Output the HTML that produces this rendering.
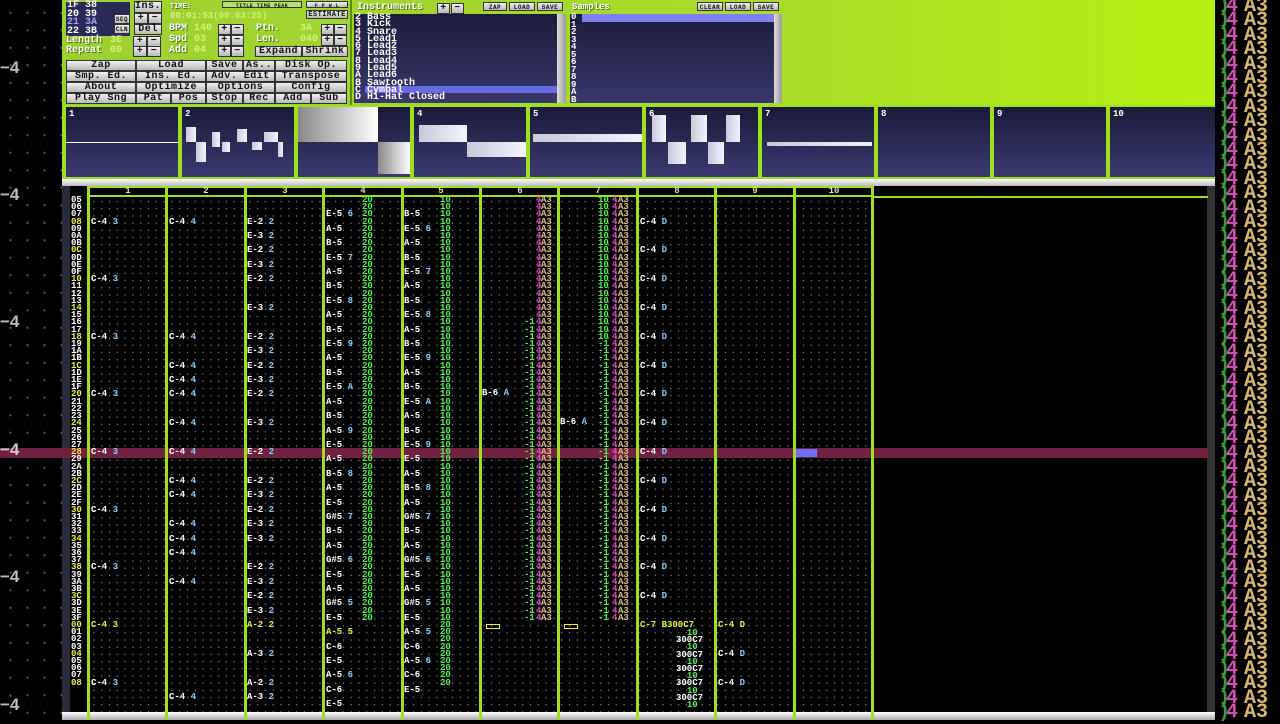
<!DOCTYPE html>
<html><head><meta charset="utf-8">
<style>
*{margin:0;padding:0;box-sizing:border-box}
body{width:1280px;height:720px;overflow:hidden;background:#000;position:relative;font-family:"Liberation Mono",monospace;font-weight:bold}
.a{position:absolute}
pre{position:absolute;font-family:"Liberation Mono",monospace;font-weight:bold;font-size:9px;line-height:7.2px;white-space:pre;margin:0}
.top{left:62px;top:0;width:1153px;height:106px;background:linear-gradient(90deg,#9cd030 0%,#a8dc2c 60%,#b4f010 100%)}
.btn{position:absolute;background:linear-gradient(#f0f0f0,#b8b8b8);border:1px solid #333;color:#111;font-size:10px;line-height:9px;text-align:center;height:11px;letter-spacing:0.5px}
.lbl{position:absolute;color:#fff;font-size:10px;line-height:10px;text-shadow:1px 1px 0 #4a7010}
.val{position:absolute;color:#d8f080;font-size:10px;line-height:10px}
.navy{position:absolute;background:linear-gradient(#1c1c3a,#38386c);}
.smp{position:absolute;top:107px;height:70px;background:linear-gradient(#1a1a38,#3a3a72);border-right:3px solid #9ee020}
.smp span{position:absolute;left:3px;top:2px;color:#fff;font-size:9px}
.w{position:absolute;background:linear-gradient(90deg,#c8c8d8,#f4f4ff)}
.sep{position:absolute;top:186px;width:3px;height:534px;background:#9ee020}
.lm{position:absolute;left:0;color:#bbb;font-size:17px;font-family:"Liberation Sans",sans-serif;font-weight:bold}
.hn{position:absolute;top:187px;width:20px;margin-left:-10px;text-align:center;font-size:9px;line-height:9px;color:#e8e860}
</style></head><body>

<div class="a" style="left:0;top:0;width:62px;height:720px;background-image:radial-gradient(circle,#555 1px,transparent 1.3px);background-size:17px 17.5px;background-position:2px 4px"></div>
<div class="lm" style="top:58px">−4</div>
<div class="lm" style="top:185px">−4</div>
<div class="lm" style="top:312px">−4</div>
<div class="lm" style="top:567px">−4</div>
<div class="lm" style="top:695px">−4</div>

<div class="a" style="left:1215px;top:0;width:65px;height:720px;background:#000"></div>
<pre style="left:1218px;top:0;font-size:20px;line-height:14.4px;color:#3a9a3a">
)
)
)
)
)
)
)
)
)
)
)
)
)
)
)
)
)
)
)
)
)
)
)
)
)
)
)
)
)
)
)
)
)
)
)
)
)
)
)
)
)
)
)
)
)
)
)
)
)
)
</pre>
<pre style="left:1226px;top:0;font-size:20px;line-height:14.4px;color:#d050b0">
4
4
4
4
4
4
4
4
4
4
4
4
4
4
4
4
4
4
4
4
4
4
4
4
4
4
4
4
4
4
4
4
4
4
4
4
4
4
4
4
4
4
4
4
4
4
4
4
4
4
</pre>
<pre style="left:1244px;top:0;font-size:20px;line-height:14.4px;color:#d8b870">
A3
A3
A3
A3
A3
A3
A3
A3
A3
A3
A3
A3
A3
A3
A3
A3
A3
A3
A3
A3
A3
A3
A3
A3
A3
A3
A3
A3
A3
A3
A3
A3
A3
A3
A3
A3
A3
A3
A3
A3
A3
A3
A3
A3
A3
A3
A3
A3
A3
A3
</pre>

<div class="a top"></div>
<div class="navy" style="left:66px;top:2px;width:64px;height:34px;background:#2a2a58"></div>
<pre style="left:67px;top:2px;font-size:10px;line-height:8.5px;color:#fff">
1F 38
20 39
<span style="color:#a0a0ff">21 3A</span>
22 3B</pre>
<div class="btn" style="left:114px;top:14px;width:16px;height:10px;font-size:6px">SEQ</div>
<div class="btn" style="left:114px;top:24px;width:16px;height:10px;font-size:6px">CLN</div>
<div class="btn" style="left:134px;top:1px;width:28px;height:12px">Ins.</div>
<div class="btn" style="left:134px;top:13px;width:14px">+</div><div class="btn" style="left:148px;top:13px;width:14px">−</div>
<div class="btn" style="left:134px;top:24px;width:28px">Del</div>
<div class="lbl" style="left:66px;top:36px">Length</div><div class="val" style="left:110px;top:36px">3E</div>
<div class="btn" style="left:133px;top:36px;width:14px">+</div><div class="btn" style="left:147px;top:36px;width:14px">−</div>
<div class="lbl" style="left:66px;top:46px">Repeat</div><div class="val" style="left:110px;top:46px">00</div>
<div class="btn" style="left:133px;top:46px;width:14px">+</div><div class="btn" style="left:147px;top:46px;width:14px">−</div>
<div class="lbl" style="left:170px;top:2px;font-size:7px">TIME:</div>
<div class="val" style="left:170px;top:11px;font-size:9px">00:01:53(00:03:25)</div>
<div class="btn" style="left:222px;top:1px;width:80px;height:7px;font-size:5px;background:#b8e070">TITLE TIME PEAK</div>
<div class="btn" style="left:306px;top:1px;width:42px;height:7px;font-size:5px">F P W L</div>
<div class="btn" style="left:306px;top:10px;width:42px;height:9px;font-size:7px">ESTIMATE</div>
<div class="lbl" style="left:169px;top:24px">BPM</div><div class="val" style="left:194px;top:24px">140</div>
<div class="lbl" style="left:169px;top:35px">Spd</div><div class="val" style="left:194px;top:35px">03</div>
<div class="lbl" style="left:169px;top:46px">Add</div><div class="val" style="left:194px;top:46px">04</div>
<div class="btn" style="left:218px;top:24px;width:13px">+</div><div class="btn" style="left:231px;top:24px;width:13px">−</div>
<div class="btn" style="left:218px;top:35px;width:13px">+</div><div class="btn" style="left:231px;top:35px;width:13px">−</div>
<div class="btn" style="left:218px;top:46px;width:13px">+</div><div class="btn" style="left:231px;top:46px;width:13px">−</div>
<div class="lbl" style="left:256px;top:24px">Ptn.</div><div class="val" style="left:300px;top:24px">3A</div>
<div class="lbl" style="left:256px;top:35px">Len.</div><div class="val" style="left:300px;top:35px">040</div>
<div class="btn" style="left:321px;top:24px;width:13px">+</div><div class="btn" style="left:334px;top:24px;width:13px">−</div>
<div class="btn" style="left:321px;top:35px;width:13px">+</div><div class="btn" style="left:334px;top:35px;width:13px">−</div>
<div class="btn" style="left:255px;top:46px;width:47px">Expand</div><div class="btn" style="left:302px;top:46px;width:46px">Shrink</div>

<div class="btn" style="left:66px;top:60px;width:70px">Zap</div>
<div class="btn" style="left:136px;top:60px;width:70px">Load</div>
<div class="btn" style="left:206px;top:60px;width:37px">Save</div>
<div class="btn" style="left:243px;top:60px;width:32px">As..</div>
<div class="btn" style="left:275px;top:60px;width:72px">Disk Op.</div>
<div class="btn" style="left:66px;top:71px;width:70px">Smp. Ed.</div>
<div class="btn" style="left:136px;top:71px;width:70px">Ins. Ed.</div>
<div class="btn" style="left:206px;top:71px;width:69px">Adv. Edit</div>
<div class="btn" style="left:275px;top:71px;width:72px">Transpose</div>
<div class="btn" style="left:66px;top:82px;width:70px">About</div>
<div class="btn" style="left:136px;top:82px;width:70px">Optimize</div>
<div class="btn" style="left:206px;top:82px;width:69px">Options</div>
<div class="btn" style="left:275px;top:82px;width:72px">Config</div>
<div class="btn" style="left:66px;top:93px;width:70px">Play Sng</div>
<div class="btn" style="left:136px;top:93px;width:35px">Pat</div>
<div class="btn" style="left:171px;top:93px;width:35px">Pos</div>
<div class="btn" style="left:206px;top:93px;width:37px">Stop</div>
<div class="btn" style="left:243px;top:93px;width:32px">Rec</div>
<div class="btn" style="left:275px;top:93px;width:36px">Add</div>
<div class="btn" style="left:311px;top:93px;width:36px">Sub</div>

<div class="a" style="left:350px;top:0;width:2px;height:106px;background:#5a8a10"></div>
<div class="lbl" style="left:357px;top:3px;font-size:10px">Instruments</div>
<div class="btn" style="left:437px;top:3px;width:13px">+</div><div class="btn" style="left:451px;top:3px;width:13px">−</div>
<div class="btn" style="left:483px;top:2px;width:24px;height:9px;font-size:6px">ZAP</div>
<div class="btn" style="left:509px;top:2px;width:26px;height:9px;font-size:6px">LOAD</div>
<div class="btn" style="left:537px;top:2px;width:26px;height:9px;font-size:6px">SAVE</div>
<div class="navy" style="left:354px;top:14px;width:203px;height:89px"></div>
<div class="a" style="left:365px;top:86px;width:192px;height:7px;background:#6a6ae0"></div>
<pre style="left:355px;top:14px;font-size:10px;line-height:7.3px;color:#fff">
2 Bass
3 Kick
4 Snare
5 Lead1
6 Lead2
7 Lead3
8 Lead4
9 Lead5
A Lead6
B Sawtooth
C Cymbal
D Hi-Hat Closed</pre>
<div class="a" style="left:557px;top:14px;width:9px;height:89px;background:linear-gradient(90deg,#ddd,#999)"></div>
<div class="lbl" style="left:572px;top:2px;font-size:9px">Samples</div>
<div class="btn" style="left:697px;top:2px;width:26px;height:9px;font-size:6px">CLEAR</div>
<div class="btn" style="left:725px;top:2px;width:26px;height:9px;font-size:6px">LOAD</div>
<div class="btn" style="left:753px;top:2px;width:26px;height:9px;font-size:6px">SAVE</div>
<div class="navy" style="left:570px;top:14px;width:204px;height:89px"></div>
<div class="a" style="left:582px;top:14px;width:192px;height:8px;background:#8080f0"></div>
<pre style="left:571px;top:14px;font-size:9px;line-height:7.5px;color:#fff">
0
1
2
3
4
5
6
7
8
9
A
B</pre>
<div class="a" style="left:774px;top:14px;width:8px;height:89px;background:linear-gradient(90deg,#ddd,#999)"></div>

<div class="a" style="left:62px;top:105px;width:1153px;height:74px;background:#9ee020"></div>
<div class="smp" style="left:66px;width:115px"><span>1</span><div class="w" style="left:0;top:35px;width:112px;height:1px;background:#fff"></div></div>
<div class="smp" style="left:182px;width:115px"><span>2</span>
<div class="w" style="left:4px;top:20px;width:10px;height:15px"></div><div class="w" style="left:14px;top:35px;width:10px;height:20px"></div><div class="w" style="left:30px;top:25px;width:8px;height:15px"></div><div class="w" style="left:40px;top:35px;width:8px;height:10px"></div><div class="w" style="left:55px;top:22px;width:10px;height:13px"></div><div class="w" style="left:70px;top:35px;width:10px;height:8px"></div><div class="w" style="left:82px;top:25px;width:14px;height:10px"></div><div class="w" style="left:96px;top:35px;width:5px;height:15px"></div></div>
<div class="smp" style="left:298px;width:115px"><span>3</span><div class="w" style="left:0;top:0;width:80px;height:35px;background:linear-gradient(90deg,#888,#fff)"></div><div class="w" style="left:80px;top:35px;width:32px;height:32px;background:linear-gradient(90deg,#888,#fff)"></div></div>
<div class="smp" style="left:414px;width:115px"><span>4</span><div class="w" style="left:5px;top:18px;width:48px;height:17px"></div><div class="w" style="left:53px;top:35px;width:59px;height:15px"></div></div>
<div class="smp" style="left:530px;width:115px"><span>5</span><div class="w" style="left:3px;top:27px;width:109px;height:8px"></div></div>
<div class="smp" style="left:646px;width:115px"><span>6</span><div class="w" style="left:6px;top:8px;width:14px;height:27px"></div><div class="w" style="left:22px;top:35px;width:18px;height:22px"></div><div class="w" style="left:45px;top:8px;width:16px;height:27px"></div><div class="w" style="left:62px;top:35px;width:16px;height:22px"></div><div class="w" style="left:80px;top:8px;width:14px;height:27px"></div></div>
<div class="smp" style="left:762px;width:115px"><span>7</span><div class="w" style="left:5px;top:35px;width:105px;height:4px"></div></div>
<div class="smp" style="left:878px;width:115px"><span>8</span></div>
<div class="smp" style="left:994px;width:115px"><span>9</span></div>
<div class="smp" style="left:1110px;width:105px;border-right:none"><span>10</span></div>

<div class="a" style="left:62px;top:179px;width:1153px;height:7px;background:linear-gradient(#fff,#bbb)"></div>
<div class="a" style="left:62px;top:712px;width:1153px;height:8px;background:linear-gradient(#fff,#aaa)"></div>
<div class="a" style="left:1207px;top:186px;width:8px;height:526px;background:#333"></div>
<div class="a" style="left:62px;top:186px;width:8px;height:526px;background:#2a2a3a"></div>

<div class="a" style="left:88px;top:197px;width:784px;height:515px;background-image:radial-gradient(circle,#777 0.6px,transparent 0.9px);background-size:7.8px 7.2px;background-position:2px 1px"></div>
<div class="a" style="left:88px;top:186px;width:784px;height:11px;background:#000;border-top:2px solid #9ee020;border-bottom:2px solid #9ee020"></div>
<div class="a" style="left:872px;top:196px;width:336px;height:2px;background:#9ee020"></div>
<div class="hn" style="left:128px">1</div><div class="hn" style="left:206px;color:#ddd">2</div><div class="hn" style="left:285px">3</div><div class="hn" style="left:363px;color:#ddd">4</div><div class="hn" style="left:441px">5</div><div class="hn" style="left:520px;color:#ddd">6</div><div class="hn" style="left:598px">7</div><div class="hn" style="left:677px;color:#ddd">8</div><div class="hn" style="left:755px">9</div><div class="hn" style="left:834px;color:#ddd">10</div>

<div class="a" style="left:0;top:448px;width:1208px;height:10px;background:#702040"></div>
<div class="lm" style="top:440px;color:#ccc">−4</div>
<div class="a" style="left:796px;top:449px;width:21px;height:8px;background:#7070ff"></div>

<div class="sep" style="left:87px"></div><div class="sep" style="left:165px"></div><div class="sep" style="left:244px"></div><div class="sep" style="left:322px"></div><div class="sep" style="left:401px"></div><div class="sep" style="left:479px"></div><div class="sep" style="left:557px"></div><div class="sep" style="left:636px"></div><div class="sep" style="left:714px"></div><div class="sep" style="left:793px"></div><div class="sep" style="left:871px"></div>

<pre style="left:71px;top:197px;color:#fff">
05
06
07
<span style="color:#ee4">08</span>
09
0A
0B
<span style="color:#ee4">0C</span>
0D
0E
0F
<span style="color:#ee4">10</span>
11
12
13
<span style="color:#ee4">14</span>
15
16
17
<span style="color:#ee4">18</span>
19
1A
1B
<span style="color:#ee4">1C</span>
1D
1E
1F
<span style="color:#ee4">20</span>
21
22
23
<span style="color:#ee4">24</span>
25
26
27
<span style="color:#ee4">28</span>
29
2A
2B
<span style="color:#ee4">2C</span>
2D
2E
2F
<span style="color:#ee4">30</span>
31
32
33
<span style="color:#ee4">34</span>
35
36
37
<span style="color:#ee4">38</span>
39
3A
3B
<span style="color:#ee4">3C</span>
3D
3E
3F
<span style="color:#ee4">00</span>
01
02
03
<span style="color:#ee4">04</span>
05
06
07
<span style="color:#ee4">08</span></pre>

<pre style="left:91px;top:197px;color:#fff">



C-4 <span style="color:#8cf">3</span>







C-4 <span style="color:#8cf">3</span>







C-4 <span style="color:#8cf">3</span>







C-4 <span style="color:#8cf">3</span>







C-4 <span style="color:#8cf">3</span>







C-4 <span style="color:#8cf">3</span>







C-4 <span style="color:#8cf">3</span>







<span style="color:#ee4">C-4 3</span>







C-4 <span style="color:#8cf">3</span></pre>
<pre style="left:169px;top:197px;color:#fff">



C-4 <span style="color:#8cf">4</span>















C-4 <span style="color:#8cf">4</span>



C-4 <span style="color:#8cf">4</span>

C-4 <span style="color:#8cf">4</span>

C-4 <span style="color:#8cf">4</span>



C-4 <span style="color:#8cf">4</span>



C-4 <span style="color:#8cf">4</span>



C-4 <span style="color:#8cf">4</span>

C-4 <span style="color:#8cf">4</span>



C-4 <span style="color:#8cf">4</span>

C-4 <span style="color:#8cf">4</span>

C-4 <span style="color:#8cf">4</span>



C-4 <span style="color:#8cf">4</span>















C-4 <span style="color:#8cf">4</span></pre>
<pre style="left:247px;top:197px;color:#fff">



E-2 <span style="color:#8cf">2</span>

E-3 <span style="color:#8cf">2</span>

E-2 <span style="color:#8cf">2</span>

E-3 <span style="color:#8cf">2</span>

E-2 <span style="color:#8cf">2</span>



E-3 <span style="color:#8cf">2</span>



E-2 <span style="color:#8cf">2</span>

E-3 <span style="color:#8cf">2</span>

E-2 <span style="color:#8cf">2</span>

E-3 <span style="color:#8cf">2</span>

E-2 <span style="color:#8cf">2</span>



E-3 <span style="color:#8cf">2</span>



E-2 <span style="color:#8cf">2</span>



E-2 <span style="color:#8cf">2</span>

E-3 <span style="color:#8cf">2</span>

E-2 <span style="color:#8cf">2</span>

E-3 <span style="color:#8cf">2</span>

E-3 <span style="color:#8cf">2</span>



E-2 <span style="color:#8cf">2</span>

E-3 <span style="color:#8cf">2</span>

E-2 <span style="color:#8cf">2</span>

E-3 <span style="color:#8cf">2</span>

<span style="color:#ee4">A-2 2</span>



A-3 <span style="color:#8cf">2</span>



A-2 <span style="color:#8cf">2</span>

A-3 <span style="color:#8cf">2</span></pre>
<pre style="left:326px;top:197px;color:#fff">


E-5 <span style="color:#8cf">6</span>

A-5

B-5

E-5 <span style="color:#8cf">7</span>

A-5

B-5

E-5 <span style="color:#8cf">8</span>

A-5

B-5

E-5 <span style="color:#8cf">9</span>

A-5

B-5

E-5 <span style="color:#8cf">A</span>

A-5

B-5

A-5 <span style="color:#8cf">9</span>

E-5

A-5

B-5 <span style="color:#8cf">8</span>

A-5

E-5

G#5 <span style="color:#8cf">7</span>

B-5

A-5

G#5 <span style="color:#8cf">6</span>

E-5

A-5

G#5 <span style="color:#8cf">5</span>

E-5

<span style="color:#ee4">A-5 5</span>

C-6

E-5

A-5 <span style="color:#8cf">6</span>

C-6

E-5</pre>
<pre style="left:362px;top:197px;color:#5e5">
20
20
20
20
20
20
20
20
20
20
20
20
20
20
20
20
20
20
20
20
20
20
20
20
20
20
20
20
20
20
20
20
20
20
20
20
20
20
20
20
20
20
20
20
20
20
20
20
20
20
20
20
20
20
20
20
20
20
20</pre>
<pre style="left:404px;top:197px;color:#fff">


B-5

E-5 <span style="color:#8cf">6</span>

A-5

B-5

E-5 <span style="color:#8cf">7</span>

A-5

B-5

E-5 <span style="color:#8cf">8</span>

A-5

B-5

E-5 <span style="color:#8cf">9</span>

A-5

B-5

E-5 <span style="color:#8cf">A</span>

A-5

B-5

E-5 <span style="color:#8cf">9</span>

E-5

A-5

B-5 <span style="color:#8cf">8</span>

A-5

G#5 <span style="color:#8cf">7</span>

B-5

A-5

G#5 <span style="color:#8cf">6</span>

E-5

A-5

G#5 <span style="color:#8cf">5</span>

E-5

A-5 <span style="color:#8cf">5</span>

C-6

A-5 <span style="color:#8cf">6</span>

C-6

E-5</pre>
<pre style="left:440px;top:197px;color:#5e5">
10
10
10
10
10
10
10
10
10
10
10
10
10
10
10
10
10
10
10
10
10
10
10
10
10
10
10
10
10
10
10
10
10
10
10
10
10
10
10
10
10
10
10
10
10
10
10
10
10
10
10
10
10
10
10
10
10
10
10
20
20
20
20
20
20
20
20
20</pre>
<pre style="left:524px;top:197px;color:#5e5">

















-1
-1
-1
-1
-1
-1
-1
-1
-1
-1
-1
-1
-1
-1
-1
-1
-1
-1
-1
-1
-1
-1
-1
-1
-1
-1
-1
-1
-1
-1
-1
-1
-1
-1
-1
-1
-1
-1
-1
-1
-1
-1</pre>
<pre style="left:482px;top:390px;color:#fff">
B-6 <span style="color:#8cf">A</span></pre>
<pre style="left:536px;top:197px;color:#e050c0">
4
4
4
4
4
4
4
4
4
4
4
4
4
4
4
4
4
4
4
4
4
4
4
4
4
4
4
4
4
4
4
4
4
4
4
4
4
4
4
4
4
4
4
4
4
4
4
4
4
4
4
4
4
4
4
4
4
4
4</pre>
<pre style="left:541px;top:197px;color:#e0c080">
A3
A3
A3
A3
A3
A3
A3
A3
A3
A3
A3
A3
A3
A3
A3
A3
A3
A3
A3
A3
A3
A3
A3
A3
A3
A3
A3
A3
A3
A3
A3
A3
A3
A3
A3
A3
A3
A3
A3
A3
A3
A3
A3
A3
A3
A3
A3
A3
A3
A3
A3
A3
A3
A3
A3
A3
A3
A3
A3</pre>
<pre style="left:598px;top:197px;color:#5e5">
10
10
10
10
10
10
10
10
10
10
10
10
10
10
10
10
10
10
10
10
-1
-1
-1
-1
-1
-1
-1
-1
-1
-1
-1
-1
-1
-1
-1
-1
-1
-1
-1
-1
-1
-1
-1
-1
-1
-1
-1
-1
-1
-1
-1
-1
-1
-1
-1
-1
-1
-1
-1</pre>
<pre style="left:560px;top:419px;color:#fff">
B-6 <span style="color:#8cf">A</span></pre>
<pre style="left:612px;top:197px;color:#e050c0">
4
4
4
4
4
4
4
4
4
4
4
4
4
4
4
4
4
4
4
4
4
4
4
4
4
4
4
4
4
4
4
4
4
4
4
4
4
4
4
4
4
4
4
4
4
4
4
4
4
4
4
4
4
4
4
4
4
4
4</pre>
<pre style="left:618px;top:197px;color:#e0c080">
A3
A3
A3
A3
A3
A3
A3
A3
A3
A3
A3
A3
A3
A3
A3
A3
A3
A3
A3
A3
A3
A3
A3
A3
A3
A3
A3
A3
A3
A3
A3
A3
A3
A3
A3
A3
A3
A3
A3
A3
A3
A3
A3
A3
A3
A3
A3
A3
A3
A3
A3
A3
A3
A3
A3
A3
A3
A3
A3</pre>
<div class="a" style="left:486px;top:624px;width:14px;height:5px;border:1px solid #ee4"></div>
<div class="a" style="left:564px;top:624px;width:14px;height:5px;border:1px solid #ee4"></div>
<pre style="left:640px;top:197px;color:#fff">



C-4 <span style="color:#8cf">D</span>



C-4 <span style="color:#8cf">D</span>



C-4 <span style="color:#8cf">D</span>



C-4 <span style="color:#8cf">D</span>



C-4 <span style="color:#8cf">D</span>



C-4 <span style="color:#8cf">D</span>



C-4 <span style="color:#8cf">D</span>



C-4 <span style="color:#8cf">D</span>



C-4 <span style="color:#8cf">D</span>



C-4 <span style="color:#8cf">D</span>



C-4 <span style="color:#8cf">D</span>



C-4 <span style="color:#8cf">D</span>



C-4 <span style="color:#8cf">D</span>



C-4 <span style="color:#8cf">D</span>



<span style="color:#ee4">C-7 B300C7</span></pre>
<pre style="left:676px;top:630px;color:#fff">
  <span style="color:#5e5">10</span>
300C7
  <span style="color:#5e5">10</span>
300C7
  <span style="color:#5e5">10</span>
300C7
  <span style="color:#5e5">10</span>
300C7
  <span style="color:#5e5">10</span>
300C7
  <span style="color:#5e5">10</span></pre>
<pre style="left:718px;top:622px;color:#fff">
<span style="color:#ee4">C-4 D</span>



C-4 <span style="color:#8cf">D</span>



C-4 <span style="color:#8cf">D</span></pre>
</body></html>
